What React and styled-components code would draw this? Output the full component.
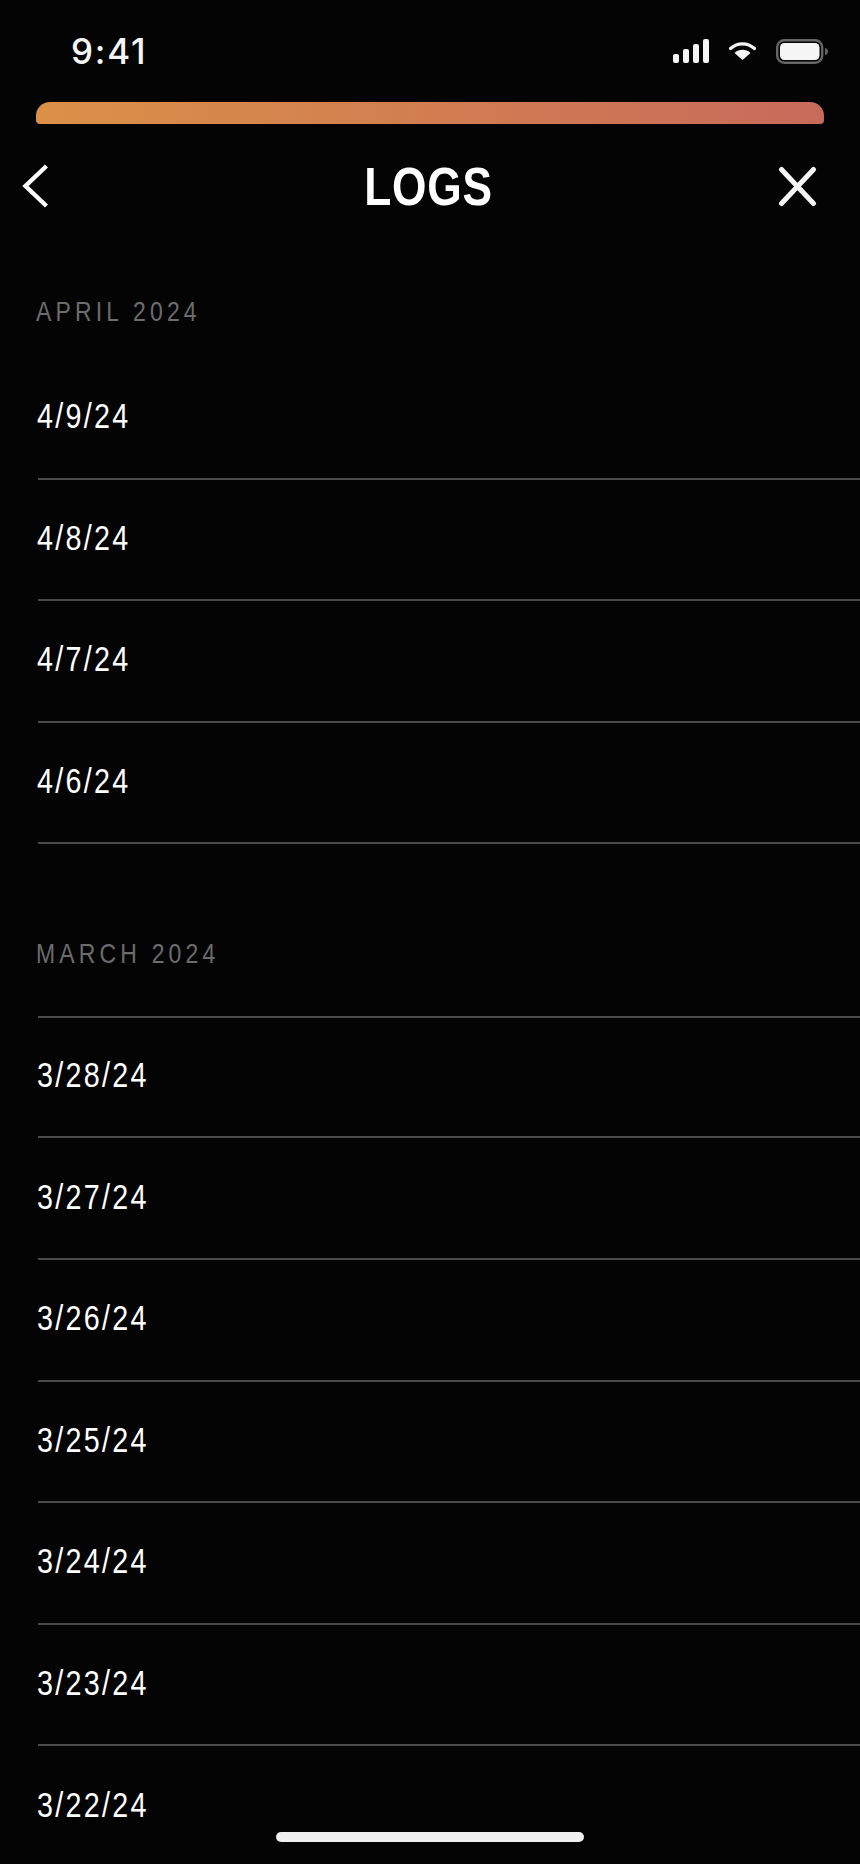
import styled, { createGlobalStyle } from "styled-components";

const GlobalStyle = createGlobalStyle`
  html, body {
    margin: 0;
    padding: 0;
    background: #040404;
  }
`;

const months = [
  { label: "APRIL 2024", gap: 40, after: 22, ruled: false, days: ["4/9/24", "4/8/24", "4/7/24", "4/6/24"] },
  {
    label: "MARCH 2024",
    gap: 86,
    after: 38,
    ruled: true,
    days: ["3/28/24", "3/27/24", "3/26/24", "3/25/24", "3/24/24", "3/23/24", "3/22/24"],
  },
];

const Screen = styled.div`
  position: relative;
  width: 860px;
  height: 1864px;
  overflow: hidden;
  background: #040404;
  color: #fff;
  font-family: "Liberation Sans", Arial, sans-serif;
`;

const StatusBar = styled.div`
  display: flex;
  align-items: center;
  justify-content: space-between;
  box-sizing: border-box;
  height: 102px;
  padding: 0 32px 0 71px;
`;

const Time = styled.span`
  font-family: Inter, "Liberation Sans", sans-serif;
  font-size: 35px;
  font-weight: 500;
  line-height: 102px;
  letter-spacing: 1.8px;
  color: #f5f5f5;
`;

const StatusIcons = styled.div`
  display: flex;
  align-items: center;
  gap: 20px;
`;

const ProgressBar = styled.div`
  height: 22px;
  margin: 0 36px;
  border-radius: 14px 14px 4px 4px;
  background: linear-gradient(90deg, #da9147 0%, #c86a5b 100%);
`;

const NavBar = styled.div`
  display: grid;
  grid-template-columns: 1fr auto 1fr;
  align-items: center;
  box-sizing: border-box;
  height: 124px;
  padding: 0 24px 0 22px;
`;

const NavSide = styled.div`
  display: flex;
  justify-content: ${(props) => (props.$end ? "flex-end" : "flex-start")};
  padding-right: ${(props) => (props.$end ? "19px" : "0")};
`;

// no narrow face is installed, so the condensed look comes from a horizontal squeeze
const Title = styled.h1`
  margin: 0;
  font-size: 54px;
  font-weight: 700;
  letter-spacing: 1px;
  color: #fff;
  transform: scaleX(0.82);
`;

const MonthLabel = styled.div`
  box-sizing: border-box;
  height: 48px;
  margin-top: ${(props) => props.$gap}px;
  margin-bottom: ${(props) => props.$after}px;
  padding-left: 36px;
  font-size: 28px;
  line-height: 48px;
  letter-spacing: 5.1px;
  color: #6c6c6c;
  transform: scaleX(0.82);
  transform-origin: 36px 50%;
`;

const DayList = styled.ul`
  margin: 0 0 0 38px;
  padding: 0;
  list-style: none;
  border-top: ${(props) => (props.$ruled ? "2px solid #4a4a4a" : "none")};
`;

const DayRow = styled.li`
  display: flex;
  align-items: center;
  box-sizing: border-box;
  height: 121.6px;
  padding-bottom: 3px;
  border-bottom: 2px solid #4a4a4a;

  ${DayList}[data-ruled="true"] &:first-child {
    margin-top: -1.6px;
  }
`;

const DayText = styled.span`
  margin-left: -1px;
  font-size: 35px;
  letter-spacing: 2.8px;
  color: #fff;
  transform: scaleX(0.82);
  transform-origin: 0 50%;
`;

const HomeIndicator = styled.div`
  position: absolute;
  left: 276px;
  bottom: 22px;
  width: 308px;
  height: 10px;
  border-radius: 5px;
  background: #f0f0f0;
`;

function SignalIcon() {
  return (
    <svg width="36" height="24" viewBox="0 0 36 24" fill="#f5f5f5">
      <rect x="0" y="15" width="6" height="9" rx="2" />
      <rect x="10" y="10" width="6" height="14" rx="2" />
      <rect x="20" y="5" width="6" height="19" rx="2" />
      <rect x="30" y="0" width="6" height="24" rx="2" />
    </svg>
  );
}

function WifiIcon() {
  return (
    <svg width="27" height="18" viewBox="0 0 27 18" fill="none">
      <path d="M1.5 6.5C8.5 .2 18.5 .2 25.5 6.5" stroke="#f5f5f5" strokeWidth="3.2" strokeLinecap="round" />
      <path d="M5.5 11C10 6.6 17 6.6 21.5 11L13.5 18Z" fill="#f5f5f5" />
    </svg>
  );
}

function BatteryIcon() {
  return (
    <svg width="52" height="25" viewBox="0 0 52 25">
      <rect x="1.2" y="1.2" width="45" height="22.6" rx="7" fill="none" stroke="#666" strokeWidth="2.4" />
      <rect x="4" y="4" width="39.5" height="17" rx="4.5" fill="#f5f5f5" />
      <path d="M49 9C51 9.5 52 11 52 12.5S51 15.5 49 16Z" fill="#666" />
    </svg>
  );
}

function BackIcon() {
  return (
    <svg width="26" height="44" viewBox="0 0 26 44" fill="none">
      <path d="M24.5 2L3.5 22L24.5 42" stroke="#fff" strokeWidth="4.4" />
    </svg>
  );
}

function CloseIcon() {
  return (
    <svg width="39" height="41" viewBox="0 0 39 41" fill="none">
      <path d="M3.5 3.5L35.5 37.5M35.5 3.5L3.5 37.5" stroke="#f5f5f5" strokeWidth="5" strokeLinecap="round" />
    </svg>
  );
}

export default function App() {
  return (
    <Screen>
      <GlobalStyle />
      <StatusBar>
        <Time>9:41</Time>
        <StatusIcons>
          <SignalIcon />
          <WifiIcon />
          <BatteryIcon />
        </StatusIcons>
      </StatusBar>
      <ProgressBar />
      <NavBar>
        <NavSide>
          <BackIcon />
        </NavSide>
        <Title>LOGS</Title>
        <NavSide $end>
          <CloseIcon />
        </NavSide>
      </NavBar>
      {months.map((month) => (
        <section key={month.label}>
          <MonthLabel $gap={month.gap} $after={month.after}>
            {month.label}
          </MonthLabel>
          <DayList $ruled={month.ruled} data-ruled={month.ruled}>
            {month.days.map((day) => (
              <DayRow key={day}>
                <DayText>{day}</DayText>
              </DayRow>
            ))}
          </DayList>
        </section>
      ))}
      <HomeIndicator />
    </Screen>
  );
}
